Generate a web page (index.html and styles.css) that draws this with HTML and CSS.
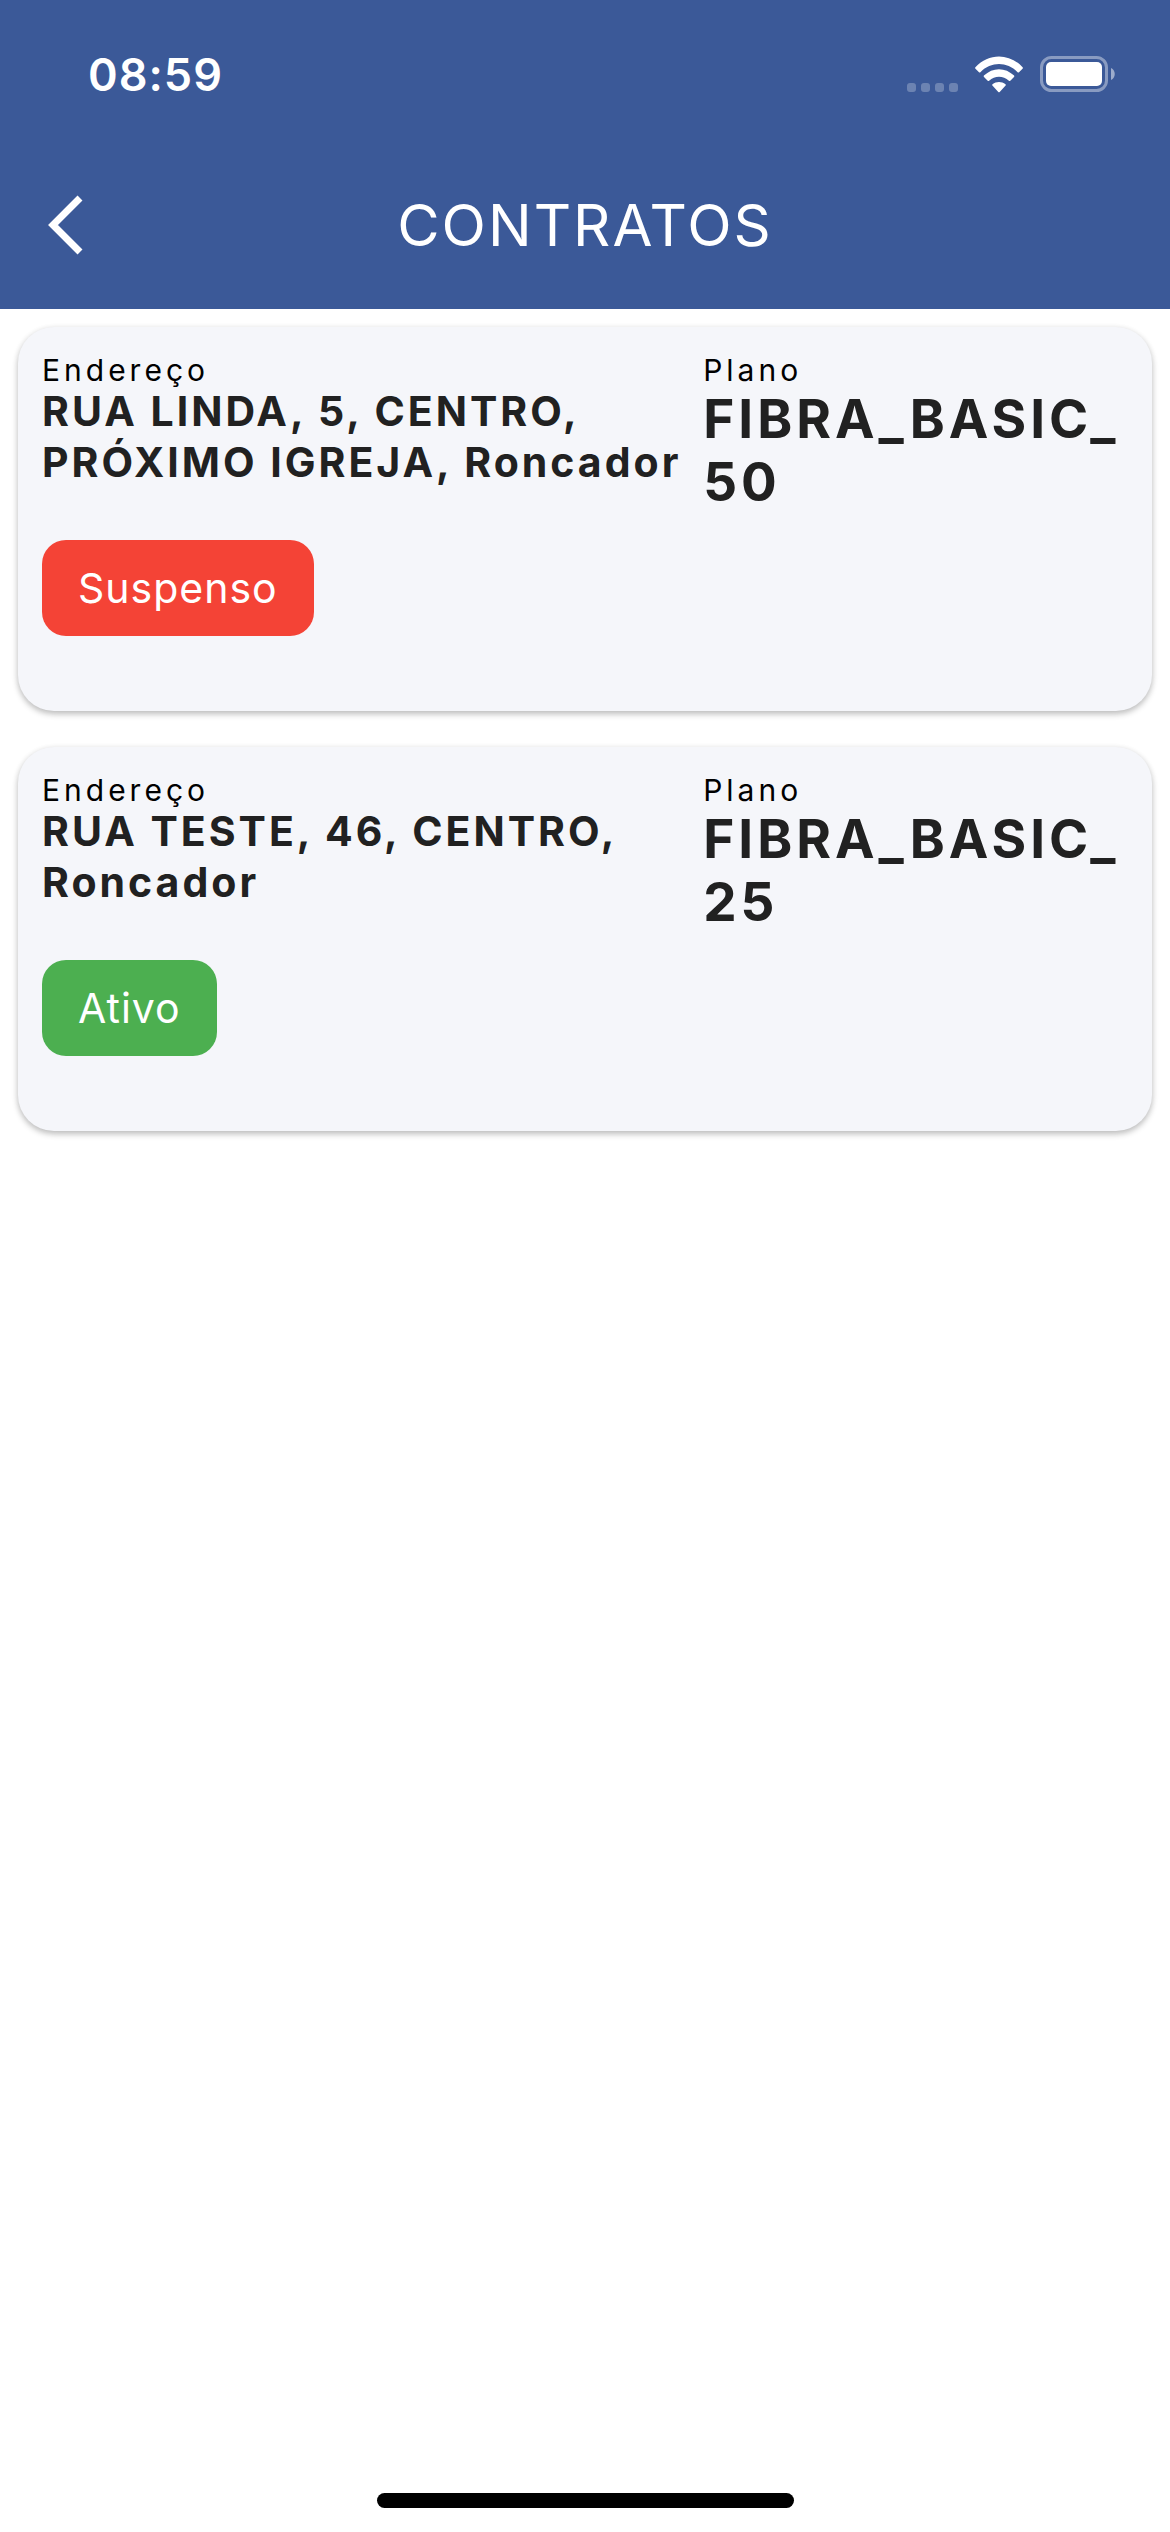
FILE: index.html
```html
<!DOCTYPE html>
<html lang="pt-BR">
<head>
  <meta charset="utf-8">
  <meta name="viewport" content="width=device-width, initial-scale=1">
  <title>Contratos</title>
  <link rel="stylesheet" href="styles.css">
</head>
<body>
  <header class="header">
    <div class="status-bar">
      <time class="clock">08:59</time>
      <div class="indicators">
        <svg class="dots" width="51" height="37" viewBox="0 0 51 37" aria-hidden="true">
          <rect x="0" y="27" width="9" height="9" rx="3"/>
          <rect x="14" y="27" width="9" height="9" rx="3"/>
          <rect x="28" y="27" width="9" height="9" rx="3"/>
          <rect x="42" y="27" width="9" height="9" rx="3"/>
        </svg>
        <svg class="wifi" width="50" height="37" viewBox="0 0 50 37" aria-hidden="true">
          <path d="M1.4 11.2C14.5-3.1 35.500-3.100 48.600 11.200Q49.200 12 48.500 12.700L45 16.200Q44.300 16.900 43.600 16.200C33 5.400 17 5.400 6.400 16.200Q5.700 16.900 5 16.200L1.500 12.700Q0.800 12 1.400 11.200Z"/>
          <path d="M9.900 19.600C18.600 11 31.400 11 40.100 19.600Q40.700 20.300 40 21L36.300 24.700Q35.600 25.300 34.900 24.700C29.200 19.500 20.800 19.500 15.100 24.700Q14.400 25.300 13.700 24.700L10 21Q9.300 20.300 9.900 19.600Z"/>
          <path d="M18.500 28.200C22.300 25.100 27.700 25.100 31.500 28.200Q32.300 28.900 31.600 29.600L25.700 36Q25 36.700 24.300 36L18.400 29.600Q17.700 28.900 18.500 28.200Z"/>
        </svg>
        <svg class="battery" width="76" height="37" viewBox="0 0 76 37" aria-hidden="true">
          <rect class="battery-shell" x="1.500" y="1.500" width="65" height="33" rx="10"/>
          <rect x="6" y="6" width="56" height="24" rx="5"/>
          <path class="battery-tip" d="M71 12C76 14 76 22 71 24Z"/>
        </svg>
      </div>
    </div>
    <nav class="app-bar">
      <button class="back" type="button" aria-label="Voltar">
        <svg width="36" height="60" viewBox="0 0 36 60" aria-hidden="true">
          <path d="M33 3L6 30L33 57"/>
        </svg>
      </button>
      <h1 class="title">CONTRATOS</h1>
    </nav>
  </header>

  <main class="contracts">
    <article class="card">
      <section class="address-column">
        <h2 class="label">Endereço</h2>
        <p class="address">RUA LINDA, 5, CENTRO, PRÓXIMO IGREJA, Roncador</p>
        <span class="badge suspended">Suspenso</span>
      </section>
      <section class="plan-column">
        <h2 class="label">Plano</h2>
        <p class="plan">FIBRA_BASIC_<wbr>50</p>
      </section>
    </article>
    <article class="card">
      <section class="address-column">
        <h2 class="label">Endereço</h2>
        <p class="address">RUA TESTE, 46, CENTRO, Roncador</p>
        <span class="badge active">Ativo</span>
      </section>
      <section class="plan-column">
        <h2 class="label">Plano</h2>
        <p class="plan">FIBRA_BASIC_<wbr>25</p>
      </section>
    </article>
  </main>

  <footer class="home-area">
    <div class="home-indicator"></div>
  </footer>
</body>
</html>
```
FILE: styles.css
```css
* {
  box-sizing: border-box;
}

body {
  display: flex;
  flex-direction: column;
  min-height: 100vh;
  margin: 0;
  background: #fff;
  color: #212121;
  font-family: Inter, "Liberation Sans", sans-serif;
}

h1,
h2,
p {
  margin: 0;
}

.header {
  background: #3b5998;
  color: #fff;
}

.status-bar {
  display: flex;
  align-items: center;
  justify-content: space-between;
  height: 141px;
  padding: 8px 54px 0 88px;
}

.clock {
  font-size: 45px;
  font-weight: 600;
  line-height: 54px;
  letter-spacing: 1px;
}

.indicators {
  display: flex;
  gap: 16px;
  fill: #fff;
}

.dots {
  opacity: 0.25;
}

.battery-shell {
  fill: none;
  stroke: #fff;
  stroke-width: 3;
  opacity: 0.4;
}

.battery-tip {
  opacity: 0.5;
}

.app-bar {
  display: grid;
  grid-template-columns: 132px 1fr 132px;
  align-items: center;
  height: 168px;
}

.back {
  display: flex;
  align-items: center;
  height: 132px;
  padding: 0 0 0 47px;
  border: 0;
  background: none;
}

.back path {
  fill: none;
  stroke: #fff;
  stroke-width: 7;
}

.title {
  font-size: 58px;
  font-weight: 400;
  line-height: 70px;
  letter-spacing: 2px;
  text-align: center;
}

.contracts {
  display: flex;
  flex-direction: column;
  gap: 36px;
  padding: 18px;
}

.card {
  display: grid;
  grid-template-columns: 3fr 2fr;
  min-height: 384px;
  padding: 27px 8px 24px 24px;
  border-radius: 36px;
  background: #f5f6fa;
  box-shadow: 0 3px 6px rgba(0, 0, 0, 0.24), 0 1px 6px rgba(0, 0, 0, 0.06);
}

.address-column,
.plan-column {
  display: flex;
  flex-direction: column;
  align-items: flex-start;
}

.plan-column {
  gap: 2px;
}

.label {
  color: #000;
  font-size: 30px;
  font-weight: 400;
  line-height: 32px;
  letter-spacing: 4px;
}

.address {
  min-height: 102px;
  font-size: 41px;
  font-weight: 700;
  line-height: 51px;
  letter-spacing: 3px;
}

.plan {
  font-size: 53px;
  font-weight: 700;
  line-height: 63px;
  letter-spacing: 4px;
}

.badge {
  margin-top: 52px;
  padding: 22px 36px;
  border-radius: 24px;
  color: #fff;
  font-size: 41px;
  font-weight: 400;
  line-height: 52px;
  letter-spacing: 1px;
}

.suspended {
  background: #f44336;
}

.active {
  background: #4caf50;
}

.home-area {
  display: flex;
  justify-content: center;
  margin-top: auto;
  padding-bottom: 24px;
}

.home-indicator {
  width: 417px;
  height: 15px;
  border-radius: 8px;
  background: #000;
}
```
